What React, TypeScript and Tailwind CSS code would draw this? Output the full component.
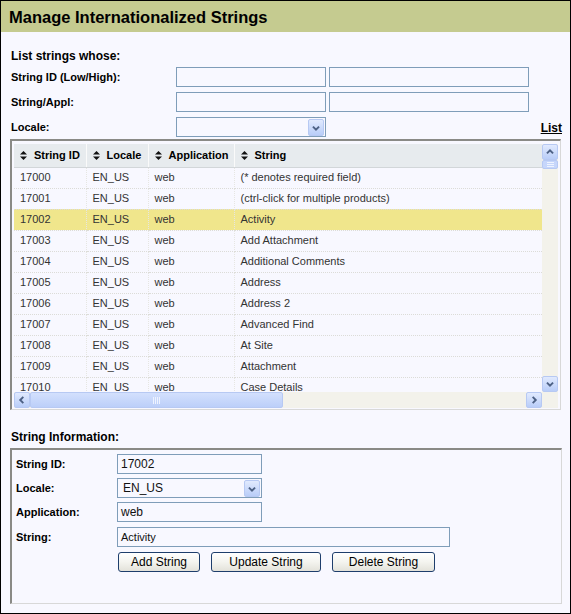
import React from 'react'

const rows: [string, string][] = [
  ['17000', '(* denotes required field)'],
  ['17001', '(ctrl-click for multiple products)'],
  ['17002', 'Activity'],
  ['17003', 'Add Attachment'],
  ['17004', 'Additional Comments'],
  ['17005', 'Address'],
  ['17006', 'Address 2'],
  ['17007', 'Advanced Find'],
  ['17008', 'At Site'],
  ['17009', 'Attachment'],
  ['17010', 'Case Details'],
]

const SELECTED = '17002'

function SortIcon() {
  return (
    <svg width="7" height="9" viewBox="0 0 7 9" className="shrink-0">
      <path d="M0 3.5 L3.5 0 L7 3.5 Z" fill="#111" />
      <path d="M0 5.5 L3.5 9 L7 5.5 Z" fill="#111" />
    </svg>
  )
}

function Chevron({ dir }: { dir: 'up' | 'down' | 'left' | 'right' }) {
  const pts = {
    up: '4.5,9.5 8,6 11.5,9.5',
    down: '4.5,6.5 8,10 11.5,6.5',
    left: '9.5,4.5 6,8 9.5,11.5',
    right: '6.5,4.5 10,8 6.5,11.5',
  }[dir]
  return (
    <svg width="16" height="16" viewBox="0 0 16 16">
      <polyline points={pts} fill="none" stroke="#4d6185" strokeWidth="2.2" />
    </svg>
  )
}

function ScrollBtn({ dir }: { dir: 'up' | 'down' | 'left' | 'right' }) {
  return (
    <div className="w-[16px] h-[16px] rounded-[2px] border border-[#b7c9f3] bg-gradient-to-b from-[#e1eafe] to-[#b9cdf8] flex items-center justify-center overflow-hidden">
      <Chevron dir={dir} />
    </div>
  )
}

function DropBtn() {
  return (
    <div className="absolute right-[1px] top-[1px] w-[16px] h-[17px] rounded-[2px] border border-[#b7c9f3] bg-gradient-to-b from-[#e1eafe] to-[#b9cdf8] flex items-center justify-center">
      <Chevron dir="down" />
    </div>
  )
}

function TextBox({ w, value, small }: { w: string; value?: string; small?: boolean }) {
  return (
    <div
      className={
        w +
        ' h-[20px] border border-[#7f9db9] bg-[#f8f8ff] flex items-center pl-[3px] text-[#111] ' +
        (small ? 'text-[11px]' : 'text-[12px]')
      }
    >
      {value}
    </div>
  )
}

function SelectBox({ w, value }: { w: string; value?: string }) {
  return (
    <div className={w + ' relative h-[20px] border border-[#7f9db9] bg-[#f8f8ff] flex items-center pl-[5px] text-[12px] text-[#111]'}>
      {value}
      <DropBtn />
    </div>
  )
}

function XpButton({ w, label, ml }: { w: string; label: string; ml: string }) {
  return (
    <div
      className={
        w +
        ' ' +
        ml +
        ' h-[20px] rounded-[3px] border border-[#1e3e6c] bg-gradient-to-b from-[#ffffff] via-[#f4f4ef] to-[#e3e2da] flex items-center justify-center text-[12px] text-black'
      }
    >
      {label}
    </div>
  )
}

export default function App() {
  const cols = [
    { label: 'String ID', w: 'w-[72px]' },
    { label: 'Locale', w: 'w-[62px]' },
    { label: 'Application', w: 'w-[86px]' },
    { label: 'String', w: 'w-[308px]' },
  ]

  return (
    <div className="w-[571px] h-[614px] border border-black bg-[#f8f8ff] flex flex-col overflow-hidden font-['Liberation_Sans',Arial,sans-serif]">
      {/* Title bar */}
      <div className="h-[31px] shrink-0 bg-[#c5cb90] pl-[8px] flex items-center">
        <h1 className="text-[16.5px] font-bold text-black leading-none pt-[2px]">Manage Internationalized Strings</h1>
      </div>

      {/* Filter */}
      <div className="pl-[10px] pr-[8px] pt-[17px]">
        <div className="text-[12px] font-bold leading-[14px] text-black">List strings whose:</div>
        <div className="mt-[4px] flex flex-col gap-[5px]">
          <div className="flex items-center">
            <label className="w-[165px] text-[11px] font-bold">String ID (Low/High):</label>
            <TextBox w="w-[150px]" />
            <div className="w-[3px]" />
            <TextBox w="w-[200px]" />
          </div>
          <div className="flex items-center">
            <label className="w-[165px] text-[11px] font-bold">String/Appl:</label>
            <TextBox w="w-[150px]" />
            <div className="w-[3px]" />
            <TextBox w="w-[200px]" />
          </div>
          <div className="flex items-center">
            <label className="w-[165px] text-[11px] font-bold">Locale:</label>
            <SelectBox w="w-[150px]" />
            <div className="flex-1" />
            <a className="text-[12px] font-bold underline text-black leading-[14px] pt-[1px]">List</a>
          </div>
        </div>
      </div>

      {/* Results grid */}
      <div className="ml-[9px] mt-[2px] w-[551px] h-[271px] border-t-2 border-l-2 border-[#8a8a86] border-r border-b border-r-[#d8d8d8] border-b-[#d8d8d8] pt-[3px] pl-[2px]">
        <div className="grid grid-cols-[528px_16px] grid-rows-[248px_16px]">
          <div className="overflow-hidden bg-[#f8f8ff]">
            <table className="table-fixed border-collapse w-[528px] text-[11px]">
              <colgroup>
                {cols.map((c) => (
                  <col key={c.label} className={c.w} />
                ))}
              </colgroup>
              <thead>
                <tr className="h-[23px] bg-[#e7ebee]">
                  {cols.map((c, i) => (
                    <th
                      key={c.label}
                      className={
                        'p-0 text-left font-bold text-black border-b border-[#d2d6d9] ' +
                        (i < 3 ? 'border-r border-r-[#fafafa]' : '')
                      }
                    >
                      <div className="flex items-center gap-[7px] pl-[6px]">
                        <SortIcon />
                        <span>{c.label}</span>
                      </div>
                    </th>
                  ))}
                </tr>
              </thead>
              <tbody>
                {rows.map(([id, str]) => {
                  const sel = id === SELECTED
                  const cells = [id, 'EN_US', 'web', str]
                  return (
                    <tr key={id} className={'h-[21px] ' + (sel ? 'bg-[#f0e68c]' : '')}>
                      {cells.map((v, i) => (
                        <td
                          key={i}
                          className={
                            'p-0 pl-[6px] text-[#333] whitespace-nowrap border-b border-dotted border-[#dcdcd8] ' +
                            (i < 3 ? 'border-r border-r-[#e6e6e2]' : '')
                          }
                        >
                          {v}
                        </td>
                      ))}
                    </tr>
                  )
                })}
              </tbody>
            </table>
          </div>

          {/* vertical scrollbar */}
          <div className="bg-[#f3f2eb] flex flex-col">
            <ScrollBtn dir="up" />
            <div className="w-[16px] h-[9px] rounded-[2px] border border-[#b7c9f3] bg-[#c6d6fb] flex flex-col items-center justify-center gap-[1px]">
              <div className="w-[7px] h-[1px] bg-[#eef3ff]" />
              <div className="w-[7px] h-[1px] bg-[#eef3ff]" />
              <div className="w-[7px] h-[1px] bg-[#eef3ff]" />
            </div>
            <div className="flex-1" />
            <ScrollBtn dir="down" />
          </div>

          {/* horizontal scrollbar */}
          <div className="bg-[#f3f2eb] flex">
            <ScrollBtn dir="left" />
            <div className="w-[253px] h-[16px] rounded-[2px] border border-[#b7c9f3] bg-gradient-to-b from-[#d3e0fd] to-[#bccff9] flex items-center justify-center gap-[1px]">
              <div className="w-[1px] h-[7px] bg-[#eef3ff]" />
              <div className="w-[1px] h-[7px] bg-[#eef3ff]" />
              <div className="w-[1px] h-[7px] bg-[#eef3ff]" />
              <div className="w-[1px] h-[7px] bg-[#eef3ff]" />
            </div>
            <div className="flex-1" />
            <ScrollBtn dir="right" />
          </div>
          <div className="bg-[#f3f2eb]" />
        </div>
      </div>

      {/* String information */}
      <div className="pl-[10px] mt-[20px] text-[12px] font-bold leading-[14px] text-black">String Information:</div>
      <div className="ml-[9px] mt-[4px] w-[552px] h-[156px] border-t-2 border-l-2 border-[#8a8a86] border-r border-b border-r-[#d8d8d8] border-b-[#d8d8d8] pt-[4px] pl-[4px]">
        <div className="flex flex-col">
          <div className="flex items-center">
            <label className="w-[101px] text-[11px] font-bold">String ID:</label>
            <TextBox w="w-[145px]" value="17002" />
          </div>
          <div className="flex items-center mt-[4px]">
            <label className="w-[101px] text-[11px] font-bold">Locale:</label>
            <SelectBox w="w-[145px]" value="EN_US" />
          </div>
          <div className="flex items-center mt-[4px]">
            <label className="w-[101px] text-[11px] font-bold">Application:</label>
            <TextBox w="w-[145px]" value="web" />
          </div>
          <div className="flex items-center mt-[5px]">
            <label className="w-[101px] text-[11px] font-bold">String:</label>
            <TextBox w="w-[333px]" value="Activity" small />
          </div>
          <div className="flex items-center mt-[5px] pl-[101px]">
            <XpButton w="w-[82px]" ml="ml-[1px]" label="Add String" />
            <XpButton w="w-[110px]" ml="ml-[11px]" label="Update String" />
            <XpButton w="w-[103px]" ml="ml-[11px]" label="Delete String" />
          </div>
        </div>
      </div>
    </div>
  )
}
